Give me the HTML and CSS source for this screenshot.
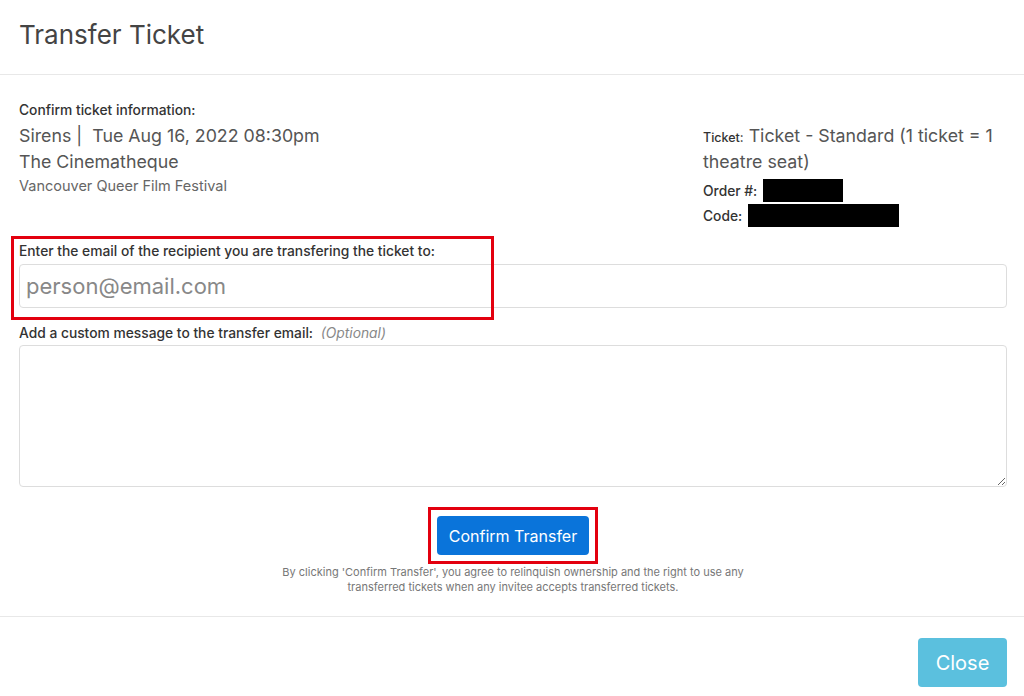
FILE: index.html
```html
<!DOCTYPE html>
<html lang="en">
<head>
  <meta charset="UTF-8">
  <title>Transfer Ticket</title>
  <link rel="stylesheet" href="styles.css">
</head>
<body>
  <div class="modal">
    <header class="modal-header">
      <h1>Transfer Ticket</h1>
    </header>

    <main class="modal-body">
      <section class="ticket-info">
        <div class="event">
          <p class="small-label">Confirm ticket information:</p>
          <p class="big">Sirens |&nbsp; Tue Aug 16, 2022 08:30pm</p>
          <p class="big">The Cinematheque</p>
          <p class="festival">Vancouver Queer Film Festival</p>
        </div>
        <div class="ticket">
          <p class="big"><span class="tiny-label">Ticket:</span> <span>Ticket - Standard (1 ticket = 1</span></p>
          <p class="big">theatre seat)</p>
          <p class="redacted-row"><span class="small-label">Order #:</span><span class="redacted order"></span></p>
          <p class="redacted-row"><span class="small-label">Code:</span><span class="redacted code"></span></p>
        </div>
      </section>

      <div class="field email-field">
        <div class="highlight"></div>
        <label class="small-label" for="email">Enter the email of the recipient you are transfering the ticket to:</label>
        <input type="text" id="email" placeholder="person@email.com">
      </div>

      <div class="field message-field">
        <label class="small-label" for="message">Add a custom message to the transfer email: <em>(Optional)</em></label>
        <textarea id="message"></textarea>
      </div>

      <div class="confirm">
        <div class="confirm-box">
          <button class="btn-primary">Confirm Transfer</button>
        </div>
        <p class="disclaimer">By clicking 'Confirm Transfer', you agree to relinquish ownership and the right to use any<br>transferred tickets when any invitee accepts transferred tickets.</p>
      </div>
    </main>

    <footer class="modal-footer">
      <button class="btn-close">Close</button>
    </footer>
  </div>
</body>
</html>
```

FILE: styles.css
```css
body {
  margin: 0;
  font-family: Inter, "Open Sans", sans-serif;
  background: #fff;
  color: #555;
}
p {
  margin: 0;
}
.modal-header {
  height: 75px;
  border-bottom: 1px solid #e8e8e8;
  box-sizing: border-box;
  padding: 19px 19px 0;
}
.modal-header h1 {
  margin: 0;
  font-size: 26px;
  font-weight: 400;
  color: #444;
  line-height: 32px;
}
.modal-body {
  padding: 26px 17px 0 19px;
}
.ticket-info {
  display: flex;
  justify-content: space-between;
}
.small-label {
  font-size: 13.8px;
  font-weight: 500;
  color: #333;
}
.tiny-label {
  font-size: 12.5px;
  font-weight: 500;
  color: #333;
  line-height: 1;
}
.event .small-label {
  display: block;
  line-height: 18px;
  margin-bottom: 4px;
}
.big {
  font-size: 17.8px;
  line-height: 26px;
  color: #555;
}
.festival {
  font-size: 14.5px;
  color: #666;
  line-height: 22px;
}
.ticket {
  width: 304px;
  padding-top: 22px;
}
.redacted-row {
  display: flex;
  align-items: center;
  gap: 6px;
  height: 25px;
}
.big + .redacted-row {
  margin-top: 3px;
}
.redacted {
  display: inline-block;
  background: #000;
  height: 23px;
}
.redacted.order {
  width: 80px;
}
.redacted.code {
  width: 151px;
}
.field {
  display: flex;
  flex-direction: column;
}
.email-field {
  position: relative;
  margin-top: 14px;
}
.field label {
  line-height: 18px;
  margin-bottom: 4px;
}
.highlight {
  position: absolute;
  left: -8px;
  top: -6px;
  width: 483px;
  height: 84px;
  border: 3px solid #e3000f;
  box-sizing: border-box;
}
.field em {
  font-weight: 400;
  color: #888;
  margin-left: 4px;
}
input, textarea {
  border: 1px solid #ddd;
  border-radius: 4px;
  font-family: inherit;
  box-sizing: border-box;
  width: 100%;
}
input {
  height: 44px;
  padding: 0 6px;
  font-size: 22px;
}
input::placeholder {
  color: #888;
}
textarea {
  height: 142px;
  resize: vertical;
}
.message-field {
  margin-top: 16px;
}
.message-field label {
  margin-bottom: 3px;
}
.confirm {
  display: flex;
  flex-direction: column;
  align-items: center;
  margin-top: 20px;
}
.confirm-box {
  border: 3px solid #e3000f;
  padding: 6px;
}
.btn-primary {
  display: block;
  width: 152px;
  height: 39px;
  border: none;
  border-radius: 4px;
  background: #0a74da;
  color: #fff;
  font-family: inherit;
  font-size: 16px;
}
.disclaimer {
  margin-top: 1px;
  font-size: 11px;
  line-height: 15px;
  color: #777;
  text-align: center;
}
.modal-footer {
  margin-top: 21px;
  border-top: 1px solid #e8e8e8;
  display: flex;
  justify-content: flex-end;
  padding: 21px 17px 0;
}
.btn-close {
  width: 89px;
  height: 49px;
  border: none;
  border-radius: 4px;
  background: #5bc0de;
  color: #fff;
  font-family: inherit;
  font-size: 20px;
}
```
